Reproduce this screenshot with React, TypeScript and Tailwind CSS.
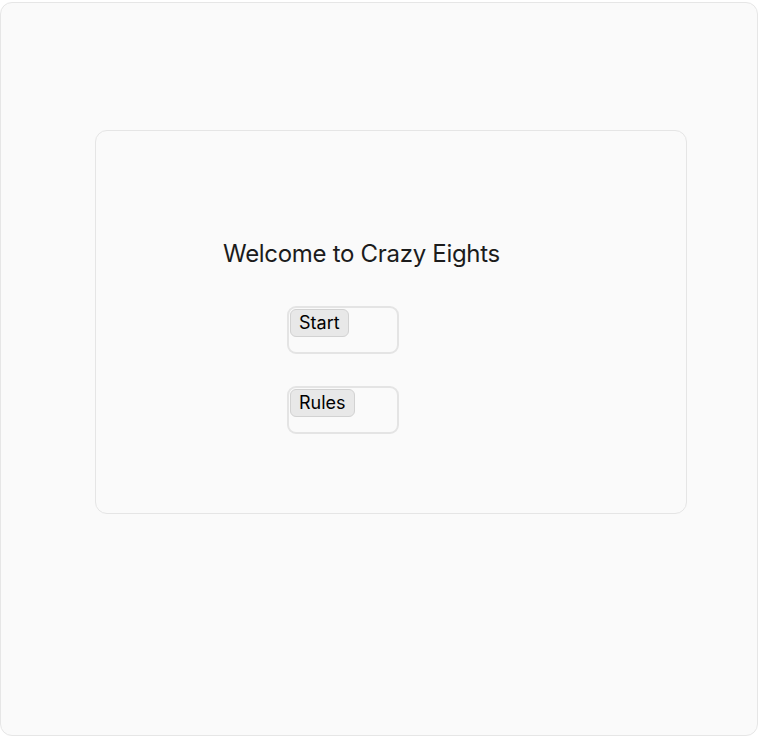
import React from 'react'

const MenuButton: React.FC<{ label: string }> = ({ label }) => (
    <div className="h-[48px] w-[112px] rounded-[9px] border-2 border-[#e4e4e4] p-[1px]">
        <button
            type="button"
            className="rounded-[6px] border border-[#d2d2d2] bg-[#e8e8e8] px-[8px] py-[1px] text-[18px] leading-[24px] text-black"
        >
            {label}
        </button>
    </div>
)

const App: React.FC = () => {
    return (
        <div className="min-h-screen bg-white pt-[2px]" style={{ fontFamily: 'Inter, "Noto Sans", sans-serif' }}>
            <div className="h-[734px] rounded-[12px] border border-[#e6e6e6] bg-[#fafafa] pt-[127px] pl-[94px]">
                <div className="h-[384px] w-[592px] rounded-[12px] border border-[#e5e5e5] bg-[#fafafa] pt-[107px]">
                    <h1 className="pl-[127px] text-[24px] leading-[32px] font-normal tracking-[-0.3px] text-[#1c1c1c]">
                        Welcome to Crazy Eights
                    </h1>
                    <div className="mt-[36px] flex flex-col gap-[32px] pl-[191px]">
                        <MenuButton label="Start" />
                        <MenuButton label="Rules" />
                    </div>
                </div>
            </div>
        </div>
    )
}

export default App
